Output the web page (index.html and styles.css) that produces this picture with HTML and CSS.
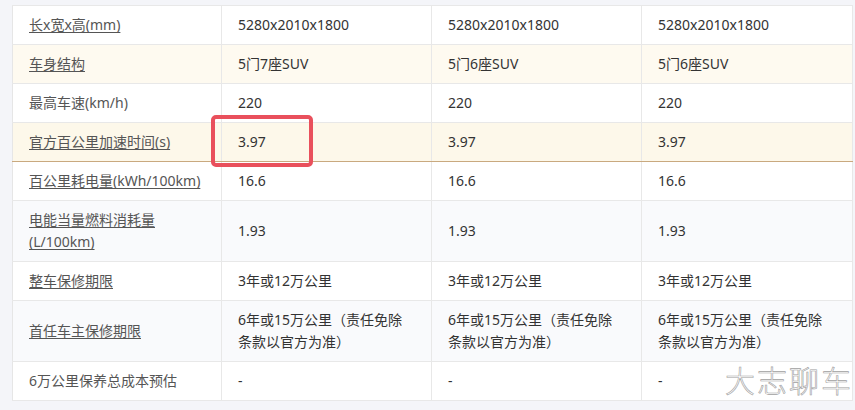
FILE: index.html
```html
<!DOCTYPE html>
<html lang="zh-CN">
<head>
<meta charset="UTF-8">
<title>参数配置</title>
<link rel="stylesheet" href="styles.css">
</head>
<body>
<div class="page">
<table class="spec">
    <tr>
        <td class="label"><a href="#">长x宽x高(mm)</a></td>
        <td>5280x2010x1800</td>
        <td>5280x2010x1800</td>
        <td>5280x2010x1800</td>
    </tr>
    <tr class="warm">
        <td class="label"><a href="#">车身结构</a></td>
        <td>5门7座SUV</td>
        <td>5门6座SUV</td>
        <td>5门6座SUV</td>
    </tr>
    <tr>
        <td class="label">最高车速(km/h)</td>
        <td>220</td>
        <td>220</td>
        <td>220</td>
    </tr>
    <tr class="warm active">
        <td class="label"><a href="#">官方百公里加速时间(s)</a></td>
        <td class="marked">3.97<span class="mark"></span></td>
        <td>3.97</td>
        <td>3.97</td>
    </tr>
    <tr>
        <td class="label"><a href="#">百公里耗电量(kWh/100km)</a></td>
        <td>16.6</td>
        <td>16.6</td>
        <td>16.6</td>
    </tr>
    <tr class="grey">
        <td class="label"><a href="#">电能当量燃料消耗量<br>(L/100km)</a></td>
        <td>1.93</td>
        <td>1.93</td>
        <td>1.93</td>
    </tr>
    <tr>
        <td class="label"><a href="#">整车保修期限</a></td>
        <td>3年或12万公里</td>
        <td>3年或12万公里</td>
        <td>3年或12万公里</td>
    </tr>
    <tr class="grey">
        <td class="label"><a href="#">首任车主保修期限</a></td>
        <td>6年或15万公里（责任免除<br>条款以官方为准）</td>
        <td>6年或15万公里（责任免除<br>条款以官方为准）</td>
        <td>6年或15万公里（责任免除<br>条款以官方为准）</td>
    </tr>
    <tr>
        <td class="label">6万公里保养总成本预估</td>
        <td>-</td>
        <td>-</td>
        <td>-</td>
    </tr>
</table>
<div class="watermark">大志聊车</div>
</div>
</body>
</html>
```

FILE: styles.css
```css
body {
    margin: 0;
    background: #f4f5f9;
    font-family: "Noto Sans", "Noto Sans CJK SC", sans-serif;
    font-size: 14px;
    color: #333;
    overflow: hidden;
}

.page {
    position: relative;
    width: 855px;
    height: 410px;
    overflow: hidden;
    padding: 5px 0 0 12px;
    box-sizing: border-box;
}

.spec {
    border-collapse: collapse;
    table-layout: fixed;
    width: 841px;
    background: #fff;
    border-left: 1px solid #e6e6e6;
}

.spec td {
    border: 1px solid #e8e8e8;
    border-left: none;
    padding: 8px 16px;
    line-height: 22px;
    vertical-align: middle;
    text-align: left;
}

.spec td:nth-child(1) { width: 176px; }
.spec td:nth-child(2) { width: 177px; }
.spec td:nth-child(3) { width: 177px; }

.spec .label {
    color: #555;
}

.spec .label a {
    color: #555;
    text-decoration: underline;
    text-underline-offset: 2px;
}

.spec tr.warm td {
    background: #fefaf0;
}

.spec tr.active td {
    background: #fdf8ea;
    border-bottom-color: #c9a97f;
}

.spec tr.grey td {
    background: #f9fafc;
}

.marked {
    position: relative;
}

.mark {
    position: absolute;
    left: -11px;
    top: -8px;
    width: 94px;
    height: 44px;
    border: 4px solid #e9505c;
    border-radius: 5px;
}

.watermark {
    position: absolute;
    right: 2px;
    bottom: 9px;
    font-family: "Noto Sans CJK SC", sans-serif;
    font-size: 30px;
    font-weight: 200;
    letter-spacing: 2px;
    color: #fff;
    -webkit-text-stroke: 0.6px #a0a0a0;
}
```
